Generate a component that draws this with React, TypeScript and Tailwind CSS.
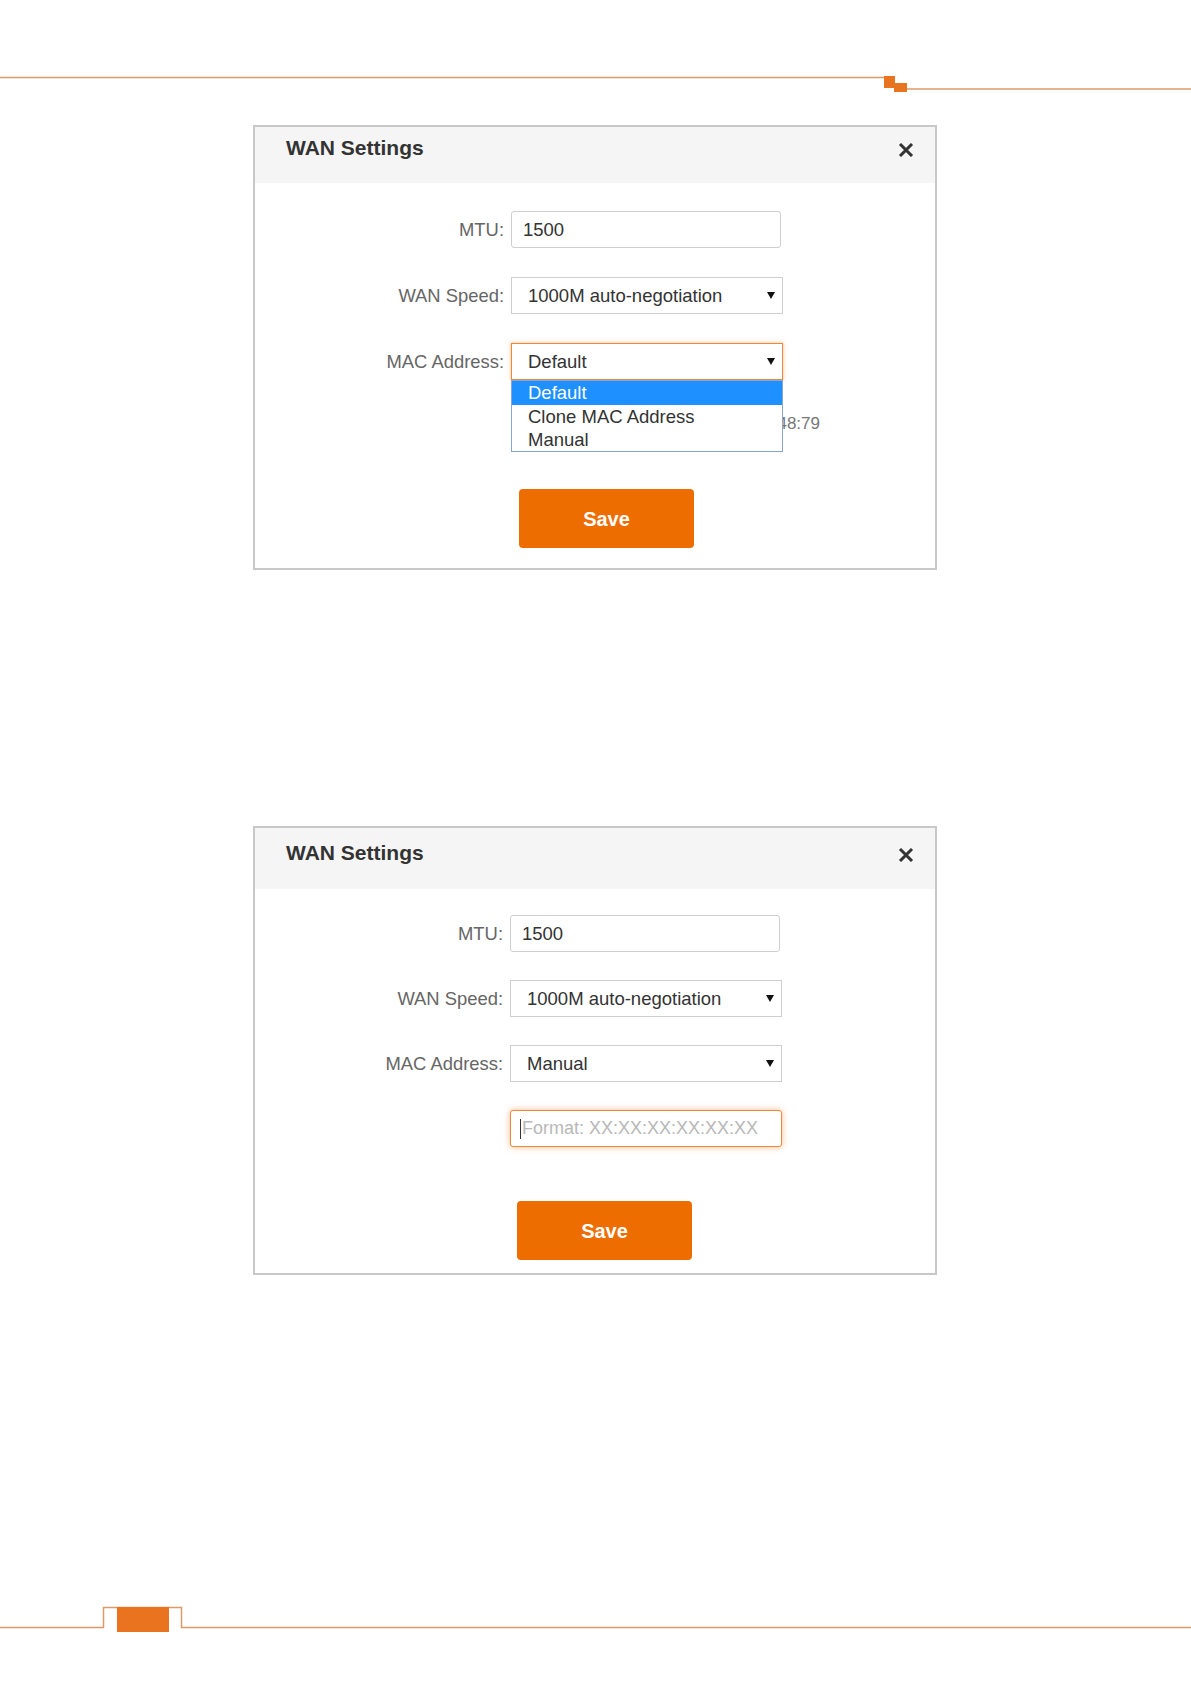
import React from "react";

const font = "font-['Liberation_Sans',Arial,Helvetica,sans-serif]";

function CloseIcon() {
  return (
    <svg width="16" height="14" viewBox="0 0 16 14" className="block">
      <path d="M2 1 L14 13 M14 1 L2 13" stroke="#333" strokeWidth="3" fill="none" />
    </svg>
  );
}

function Caret() {
  return (
    <svg width="8" height="7" viewBox="0 0 8 7" className="block">
      <polygon points="0,0 8,0 4,7" fill="#111" />
    </svg>
  );
}

function Row({ label, children }: { label: string; children: React.ReactNode }) {
  return (
    <div className="flex items-center">
      <div className="w-[250px] pr-[1px] text-right text-[18.4px] text-[#666]">{label}</div>
      <div className="ml-[6px]">{children}</div>
    </div>
  );
}

function TextBox({ value }: { value: string }) {
  return (
    <div className="flex h-[37px] w-[270px] items-center rounded-[3px] border border-[#cfcfcf] bg-white pl-[11px] text-[18.5px] text-[#333]">
      {value}
    </div>
  );
}

function Select({ value, focused }: { value: string; focused?: boolean }) {
  return (
    <div
      className={
        focused
          ? "flex h-[37px] w-[272px] items-center justify-between border border-[#f0883a] bg-white pl-[16px] pr-[7px] text-[18.5px] text-[#333] shadow-[0_0_4px_rgba(240,136,58,0.55)]"
          : "flex h-[37px] w-[272px] items-center justify-between border border-[#cfcfcf] bg-white pl-[16px] pr-[7px] text-[18.5px] text-[#333]"
      }
    >
      <span>{value}</span>
      <Caret />
    </div>
  );
}

function Header({ height, titleTop, closeTop }: { height: string; titleTop: string; closeTop: string }) {
  return (
    <div className={`flex items-start justify-between bg-[#f5f5f5] pl-[31px] pr-[21px] ${height}`}>
      <h2 className={`text-[21px] leading-[24px] font-bold text-[#333] ${titleTop}`}>WAN Settings</h2>
      <div className={closeTop}>
        <CloseIcon />
      </div>
    </div>
  );
}

function SaveButton() {
  return (
    <button className="ml-[264px] flex h-[59px] w-[175px] items-center justify-center rounded-[4px] bg-[#ed6d00] text-[20px] font-bold text-white">
      Save
    </button>
  );
}

export default function App() {
  return (
    <div className={`flex h-[1684px] w-[1191px] flex-col bg-white ${font}`}>
      {/* top rule */}
      <svg width="1191" height="100" viewBox="0 0 1191 100" className="block shrink-0">
        <line x1="0" y1="77.5" x2="885" y2="77.5" stroke="#dc9a68" strokeWidth="1.5" />
        <line x1="906" y1="89" x2="1191" y2="89" stroke="#dc9a68" strokeWidth="1.5" />
        <rect x="884" y="76" width="11" height="12" fill="#e8741f" />
        <rect x="894" y="83" width="13" height="9" fill="#e8741f" />
      </svg>

      {/* dialog 1: MAC address dropdown open */}
      <div className="ml-[253px] mt-[25px] w-[684px] border-2 border-[#c8c8c8] bg-white">
        <Header height="h-[56px]" titleTop="mt-[9px]" closeTop="mt-[16px]" />
        <div className="flex flex-col pt-[28px] pb-[20px]">
          <div className="flex flex-col gap-[29px]">
            <Row label="MTU:">
              <TextBox value="1500" />
            </Row>
            <Row label="WAN Speed:">
              <Select value="1000M auto-negotiation" />
            </Row>
            <Row label="MAC Address:">
              <div className="relative">
                <Select value="Default" focused />
                <div className="absolute left-0 top-full z-10 w-[272px] border border-[#8aa6d0] bg-white text-[18.5px] leading-[23px] text-[#333]">
                  <div className="h-[24px] bg-[#1e90ff] pl-[16px] leading-[24px] text-white">Default</div>
                  <div className="pl-[16px]">Clone MAC Address</div>
                  <div className="pl-[16px]">Manual</div>
                </div>
              </div>
            </Row>
          </div>
          <div className="mt-[32px] flex h-[24px] items-center">
            <div className="ml-[256px] w-[309px] text-right text-[17px] text-[#777]">C8:3A:35:2B:48:79</div>
          </div>
          <div className="mt-[53px]">
            <SaveButton />
          </div>
        </div>
      </div>

      {/* dialog 2: manual MAC entry */}
      <div className="ml-[253px] mt-[256px] w-[684px] border-2 border-[#c8c8c8] bg-white">
        <Header height="h-[61px]" titleTop="mt-[13px]" closeTop="mt-[20px]" />
        <div className="flex flex-col pt-[26px] pb-[13px]">
          <div className="-ml-[1px] flex flex-col gap-[28px]">
            <Row label="MTU:">
              <TextBox value="1500" />
            </Row>
            <Row label="WAN Speed:">
              <Select value="1000M auto-negotiation" />
            </Row>
            <Row label="MAC Address:">
              <Select value="Manual" />
            </Row>
            <Row label="">
              <div className="flex h-[37px] w-[272px] items-center rounded-[3px] border border-[#f0883a] bg-white pl-[9px] text-[18px] text-[#b8b8b8] shadow-[0_0_6px_rgba(240,136,58,0.6)]">
                <span className="mr-[1px] h-[20px] w-[1px] bg-[#333]" />
                Format: XX:XX:XX:XX:XX:XX
              </div>
            </Row>
          </div>
          <div className="-ml-[2px] mt-[54px]">
            <SaveButton />
          </div>
        </div>
      </div>

      {/* bottom rule */}
      <svg width="1191" height="84" viewBox="0 0 1191 84" className="mt-auto block shrink-0">
        <path d="M0 27.5 H103.5 V7.5 H181.5 V27.5 H1191" stroke="#dc9a68" strokeWidth="1.5" fill="none" />
        <rect x="117" y="7" width="52" height="25" fill="#ea7320" />
      </svg>
    </div>
  );
}
